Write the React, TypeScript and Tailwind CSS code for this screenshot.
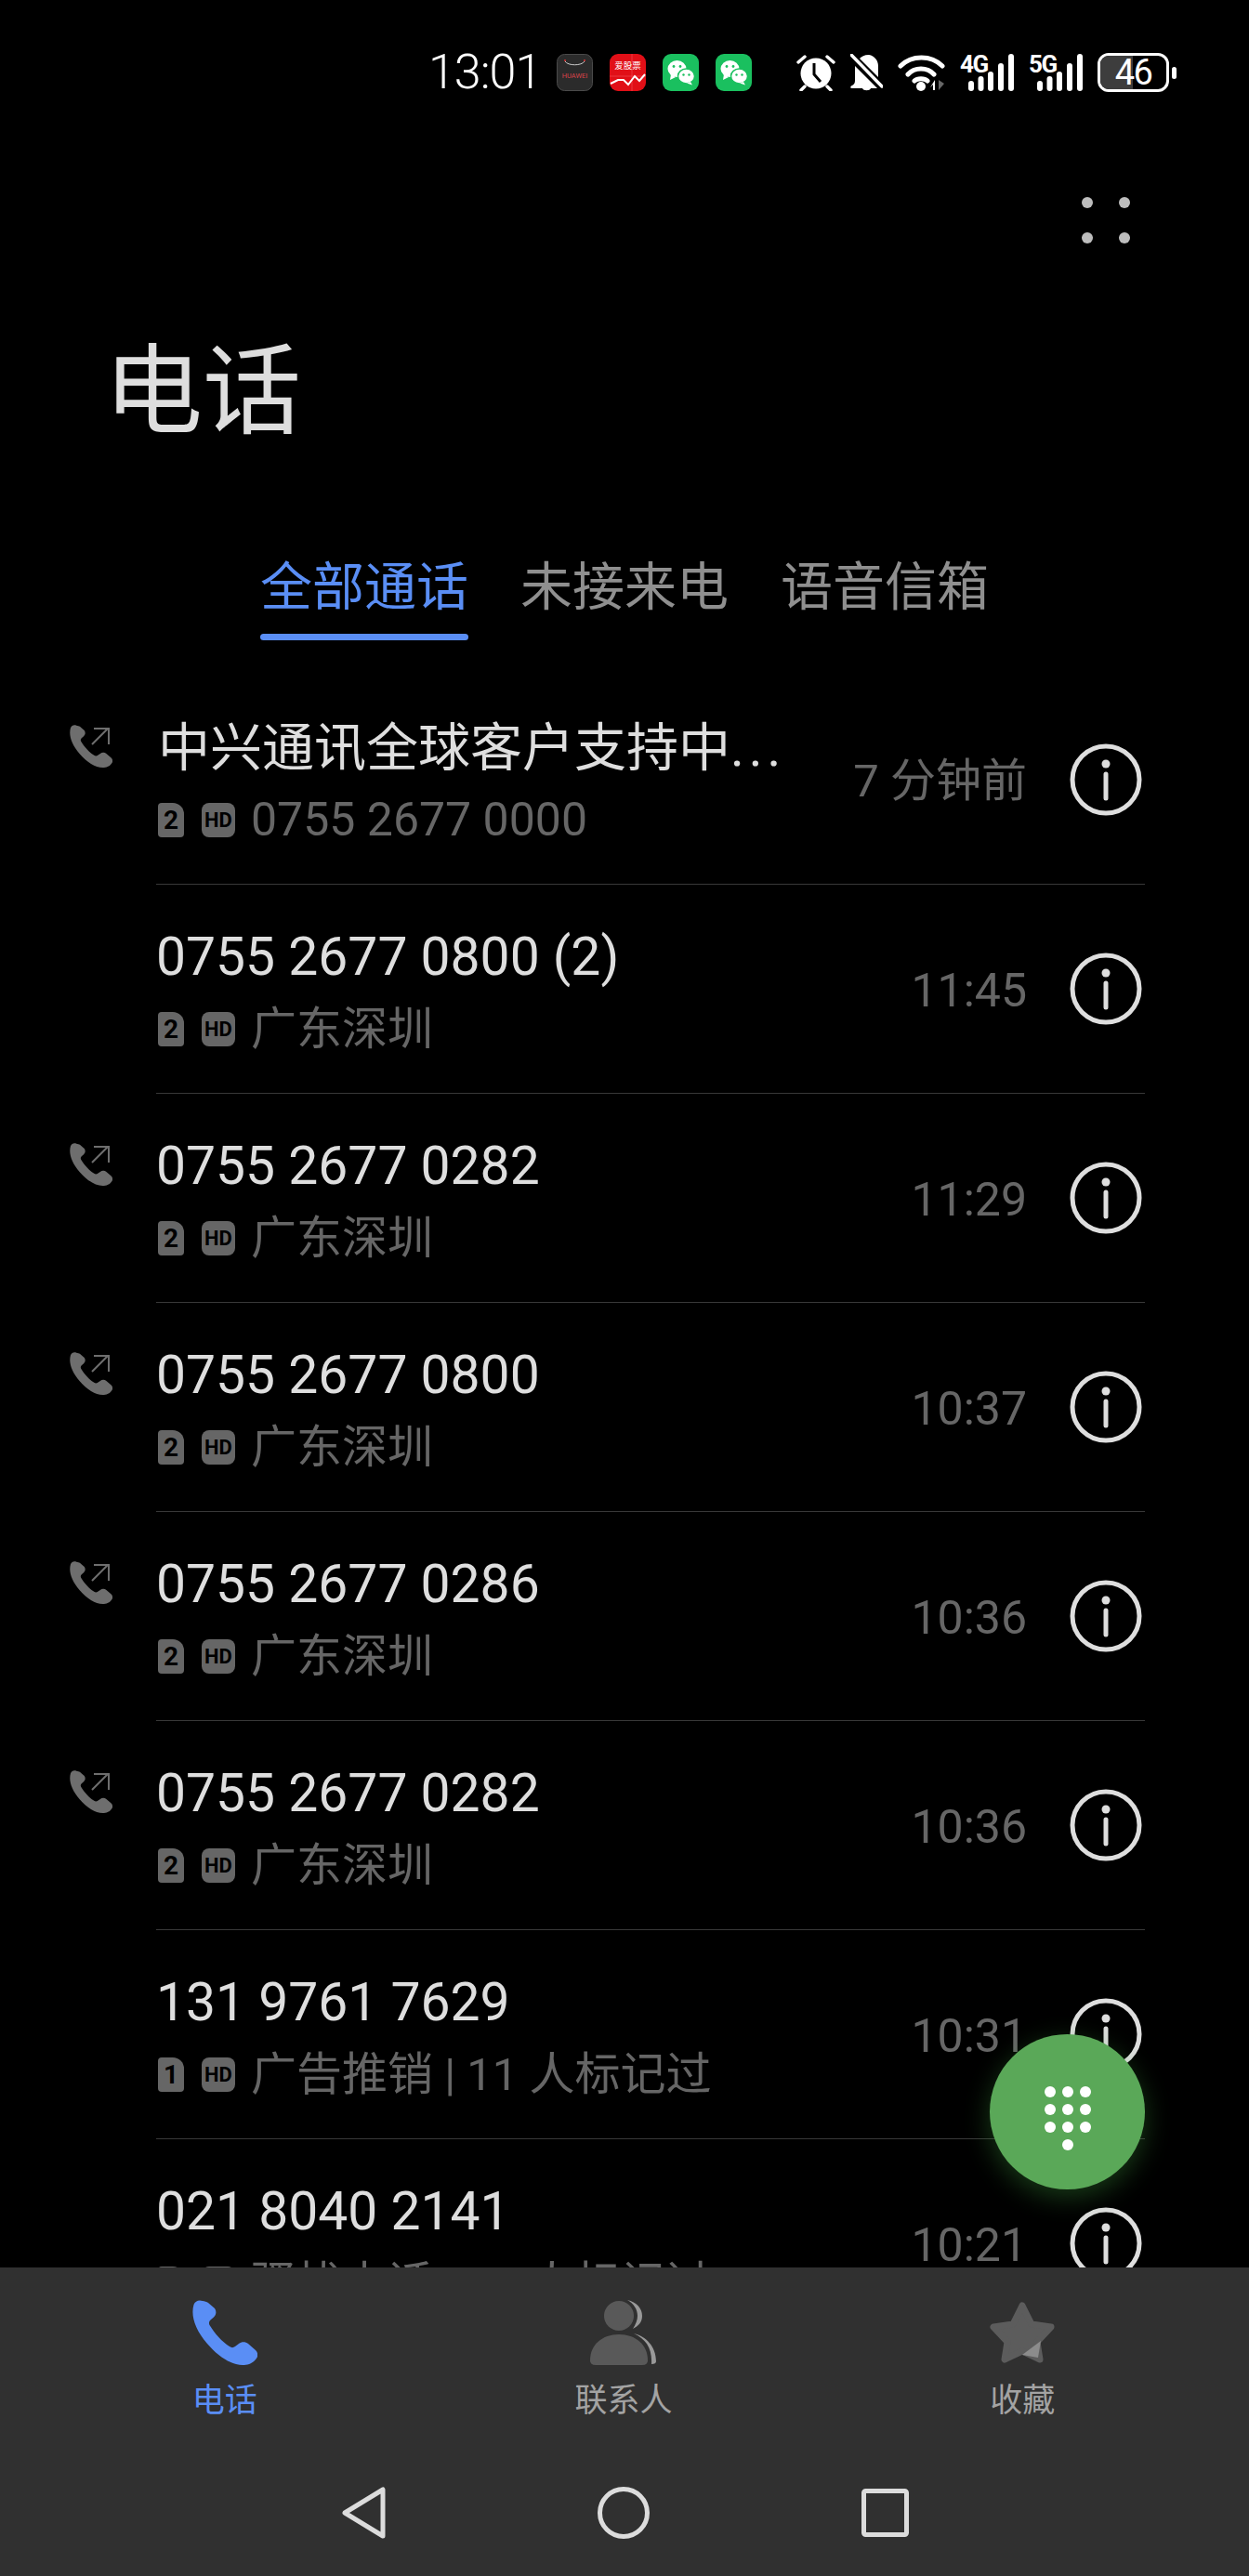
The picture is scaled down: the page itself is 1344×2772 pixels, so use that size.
const HANDSET =
  'M11 1C7-.5 3 1 1.5 5C-2 17 3 32 16 47C28 61 42 70 54 70C60 70 66 68 69.5 62C71 59 70 56 68 54L60 47C57 44.5 53 44.5 50 47L46 50C44 51.5 42 51.5 40 50C32 45 24 36 18.5 27C17.5 25 18 23 19.5 21.5L23 18.5C26 15.5 26 12 24 9L17 3C15.5 1.5 13 1.5 11 1Z'

const calls = [
  { name: '中兴通讯全球客户支持中', more: true, sim: '2', sub: '0755 2677 0000', digits: true, time: '7 分钟前', out: true },
  { name: '0755 2677 0800 (2)', sim: '2', sub: '广东深圳', time: '11:45', out: false },
  { name: '0755 2677 0282', sim: '2', sub: '广东深圳', time: '11:29', out: true },
  { name: '0755 2677 0800', sim: '2', sub: '广东深圳', time: '10:37', out: true },
  { name: '0755 2677 0286', sim: '2', sub: '广东深圳', time: '10:36', out: true },
  { name: '0755 2677 0282', sim: '2', sub: '广东深圳', time: '10:36', out: true },
  { name: '131 9761 7629', sim: '1', sub: '广告推销 | 11 人标记过', time: '10:31', out: false },
  { name: '021 8040 2141', sim: '1', sub: '骚扰电话 | 59 人标记过', time: '10:21', out: false },
]

function WeChatIcon() {
  return (
    <svg width="39" height="40" viewBox="0 0 39 40">
      <rect width="39" height="40" rx="9" fill="#1ac05f" />
      <ellipse cx="15.5" cy="16" rx="10" ry="9" fill="#fff" />
      <path d="M9 22l-1 6 6-3z" fill="#fff" />
      <ellipse cx="25.5" cy="24" rx="9" ry="8" fill="#fff" stroke="#1ac05f" strokeWidth="1.5" />
      <path d="M30 30l2 3.5-6-2z" fill="#fff" />
      <circle cx="12" cy="13.5" r="1.4" fill="#1ac05f" />
      <circle cx="19" cy="13.5" r="1.4" fill="#1ac05f" />
      <circle cx="22.5" cy="22.5" r="1.2" fill="#1ac05f" />
      <circle cx="28.5" cy="22.5" r="1.2" fill="#1ac05f" />
    </svg>
  )
}

function HuaweiIcon() {
  return (
    <svg width="39" height="40" viewBox="0 0 39 40">
      <rect x=".5" y=".5" width="38" height="39" rx="8" fill="#2b2b2b" stroke="#4a4a4a" />
      <path d="M9 8c3 5 18 5 21 0" fill="none" stroke="#c9c9c9" strokeWidth="1" />
      <circle cx="9" cy="7" r="1" fill="#d33" />
      <circle cx="30" cy="7" r="1" fill="#d33" />
      <text x="19.5" y="26" textAnchor="middle" fontSize="7.5" fill="#d8434a" fontFamily="Roboto, sans-serif">HUAWEI</text>
    </svg>
  )
}

function StockIcon() {
  return (
    <svg width="39" height="40" viewBox="0 0 39 40">
      <rect width="39" height="40" rx="9" fill="#e10f17" />
      <path d="M24 0v40M0 24h39" stroke="#f04a50" strokeWidth=".7" />
      <text x="19.5" y="16" textAnchor="middle" fontSize="9.5" fill="#fff" fontFamily="'Noto Sans CJK SC', sans-serif">爱股票</text>
      <path d="M1 32l8-4 6 0 5 5 7-9 5 5 6-7" fill="none" stroke="#fff" strokeWidth="2" />
    </svg>
  )
}

function AlarmIcon() {
  return (
    <svg width="42" height="40" viewBox="0 0 42 40">
      <circle cx="21" cy="21" r="16.5" fill="#fff" />
      <path d="M2 9l7-6M40 9l-7-6M9 35l-4 4M33 35l4 4" stroke="#fff" strokeWidth="3.4" strokeLinecap="round" />
      <path d="M19 10v12l7 8" fill="none" stroke="#000" strokeWidth="3" />
    </svg>
  )
}

function BellOffIcon() {
  return (
    <svg width="35" height="40" viewBox="0 0 35 40">
      <path d="M20 1c6 1 10 6 10 12v12l-20-20c2-2 5-4 10-4zM5 13l24 24H1c-1 0-1-3 1-3 2-1 3-3 3-5z" fill="#fff" />
      <path d="M13 37h9c-1 3-8 3-9 0z" fill="#fff" />
      <path d="M1 1l33 33" stroke="#000" strokeWidth="6" />
      <path d="M1 1l33 34" stroke="#fff" strokeWidth="3.4" strokeLinecap="round" />
    </svg>
  )
}

function WifiIcon() {
  return (
    <svg width="51" height="40" viewBox="0 0 51 40">
      <path d="M3 13C15 1 36 1 48 13M11 22C18 14 32 14 39 22M18 29C21 26 29 26 32 29" fill="none" stroke="#fff" strokeWidth="5" strokeLinecap="round" />
      <circle cx="25" cy="35" r="5" fill="#fff" />
      <path d="M40 28v11h-2v-6l-3 3z" fill="#fff" />
      <path d="M44 28v11l6-7z" fill="#666" />
    </svg>
  )
}

function SignalIcon({ label }: { label: string }) {
  const bars = [
    { x: 9, y: 29, h: 11 },
    { x: 19.5, y: 24, h: 16 },
    { x: 30, y: 19, h: 21 },
    { x: 41, y: 10, h: 30 },
    { x: 52, y: 0, h: 40 },
  ]
  return (
    <div className="relative w-[58px] h-[40px]">
      <svg width="58" height="40" viewBox="0 0 58 40">
        {bars.map((b, i) => (
          <rect key={i} x={b.x} y={b.y} width="6" height={b.h} rx="3" fill="#fff" />
        ))}
      </svg>
      <span className="absolute left-0 top-0 text-[26px] leading-[22px] font-bold tracking-[-1.5px] text-white">{label}</span>
    </div>
  )
}

function Battery() {
  return (
    <div className="flex items-center">
      <div className="relative w-[77px] h-[42px] rounded-[12px] border-[3px] border-white">
        <div className="absolute left-0 top-0 bottom-0 w-[35px] rounded-l-[9px] bg-[#3d3d3d]" />
        <div className="relative text-center text-white text-[38px] leading-[36px] tracking-[-1.5px]">46</div>
      </div>
      <div className="w-[5px] h-[13px] ml-[3px] rounded-full bg-white" />
    </div>
  )
}

function OutgoingIcon() {
  return (
    <svg width="46" height="46" viewBox="0 0 46 46">
      <path d={HANDSET} fill="#6e6e6e" transform="scale(.657)" />
      <path d="M24 21L41 4M26 4h16v17" fill="none" stroke="#6e6e6e" strokeWidth="2" />
    </svg>
  )
}

function InfoIcon() {
  return (
    <svg width="78" height="78" viewBox="0 0 78 78">
      <circle cx="39" cy="39" r="36" fill="none" stroke="#dedede" strokeWidth="5" />
      <circle cx="39" cy="22" r="4.5" fill="#dedede" />
      <path d="M39 33v26" stroke="#dedede" strokeWidth="5" strokeLinecap="round" />
    </svg>
  )
}

function SimBadge({ n }: { n: string }) {
  return (
    <span className="flex items-center justify-center w-[28px] h-[37px] ml-[2px] bg-[#666] text-black text-[28px] font-bold rounded-[4px] rounded-tr-[12px]">
      {n}
    </span>
  )
}

function CallRow({ call }: { call: (typeof calls)[number] }) {
  return (
    <div className="flex h-[225px]">
      <div className="w-[168px] shrink-0 pl-[75px] pt-[53px]">{call.out && <OutgoingIcon />}</div>
      <div className="flex flex-1 items-center mr-[112px] pr-[3px] border-b border-[#383838]">
        <div className="flex-1 min-w-0 mt-[9px]">
          <div className={`leading-[64px] text-[#dedede] whitespace-nowrap ${call.more ? 'text-[56px] pl-[2px]' : 'text-[57px]'}`}>
            {call.name}
            {call.more && <span className="tracking-[5px]">...</span>}
          </div>
          <div className="flex items-center mt-[14px] h-[64px] text-[#666] whitespace-nowrap">
            <SimBadge n={call.sim} />
            <span className="flex items-center justify-center w-[36px] h-[37px] ml-[19px] bg-[#666] text-black text-[22px] font-bold rounded-[8px]">HD</span>
            <span className={`ml-[17px] ${call.digits ? 'text-[50px]' : 'text-[49px]'}`}>{call.sub}</span>
          </div>
        </div>
        <div className={`text-[#666] whitespace-nowrap mt-[4px] mr-[46px] ${call.more ? 'text-[49px]' : 'text-[50px]'}`}>{call.time}</div>
        <InfoIcon />
      </div>
    </div>
  )
}

function NavTab({ label, active, children }: { label: string; active?: boolean; children: React.ReactNode }) {
  return (
    <div className="flex flex-col items-center">
      <div className="h-[70px] flex items-center">{children}</div>
      <div className={`text-[35px] leading-[44px] mt-[17px] ${active ? 'text-[#5a8ef5]' : 'text-[#a3a3a3]'}`}>{label}</div>
    </div>
  )
}

export default function App() {
  return (
    <div className="relative flex flex-col w-[1344px] h-[2772px] bg-black overflow-hidden font-[family-name:Roboto,'Noto_Sans_CJK_SC',sans-serif]">
      {/* Status bar */}
      <div className="flex items-center h-[42px] mt-[57px] pl-[461px]">
        <span className="w-[117px] text-white text-[52px] leading-[42px] font-light tracking-[-1px] whitespace-nowrap">13:01</span>
        <div className="flex items-center gap-[18px] ml-[21px]">
          <HuaweiIcon />
          <StockIcon />
          <WeChatIcon />
          <WeChatIcon />
        </div>
        <div className="flex items-center gap-[16px] ml-[48px]">
          <AlarmIcon />
          <BellOffIcon />
          <WifiIcon />
          <SignalIcon label="4G" />
          <SignalIcon label="5G" />
          <Battery />
        </div>
      </div>

      {/* More menu */}
      <div className="flex justify-end mt-[113px] pr-[128px]">
        <div className="grid grid-cols-2 gap-x-[28px] gap-y-[26px]">
          <span className="w-[12px] h-[12px] rounded-full bg-[#bdbdbd]" />
          <span className="w-[12px] h-[12px] rounded-full bg-[#bdbdbd]" />
          <span className="w-[12px] h-[12px] rounded-full bg-[#bdbdbd]" />
          <span className="w-[12px] h-[12px] rounded-full bg-[#bdbdbd]" />
        </div>
      </div>

      <h1 className="mt-[108px] pl-[112px] text-[106px] leading-[104px] text-[#dedede]">电话</h1>

      {/* Tabs */}
      <div className="flex justify-center gap-[56px] mt-[126px] text-[56px] leading-[64px] text-[#8f8f8f]">
        <div className="flex flex-col items-center">
          <span className="text-[#5a8ef5]">全部通话</span>
          <span className="w-[224px] h-[7px] mt-[18px] rounded-full bg-[#5a8ef5]" />
        </div>
        <span>未接来电</span>
        <span>语音信箱</span>
      </div>

      {/* Call log */}
      <div className="flex-1 min-h-0 mt-[38px] overflow-hidden">
        {calls.map((call, idx) => (
          <CallRow key={idx} call={call} />
        ))}
      </div>

      {/* Bottom nav */}
      <div className="relative shrink-0 h-[332px] bg-[#303030]">
        <div className="grid grid-cols-3 pl-[27px] pr-[29px] pt-[35px]">
          <NavTab label="电话" active>
            <svg width="70" height="70" viewBox="0 0 70 70">
              <path d={HANDSET} fill="#5a8ef5" />
            </svg>
          </NavTab>
          <NavTab label="联系人">
            <svg width="71" height="70" viewBox="0 0 71 70">
              <path d="M40 0C50 2 56 9 56 17C56 24 52 28 46 31C49 26 51 22 51 17C51 10 47 4 40 0Z" fill="#999" />
              <path d="M47 36C60 39 71 50 71 66Q71 69 66 69C67 52 60 42 47 36Z" fill="#999" />
              <circle cx="31" cy="17" r="16" fill="#595959" />
              <path d="M0 65C0 48 13 37 31 37C49 37 62 48 62 65Q62 70 56 70H6Q0 70 0 65Z" fill="#595959" />
            </svg>
          </NavTab>
          <NavTab label="收藏">
            <svg width="70" height="66" viewBox="0 0 70 66">
              <path d="M35 4L45 24L66 27L51 43L54 62L35 53L16 62L19 43L4 27L25 24Z" fill="#5c5c5c" stroke="#5c5c5c" strokeWidth="7" strokeLinejoin="round" />
              <path d="M35 57L55 42L52 60Z" fill="#8c8c8c" />
            </svg>
          </NavTab>
        </div>
        {/* System navigation */}
        <div className="flex items-center justify-center gap-[228px] mt-[70px] pl-[2px]">
          <svg width="47" height="56" viewBox="0 0 47 56">
            <path d="M44 3V53L3 28Z" fill="none" stroke="#dcdcdc" strokeWidth="5" strokeLinejoin="round" />
          </svg>
          <svg width="56" height="56" viewBox="0 0 56 56">
            <circle cx="28" cy="28" r="25.5" fill="none" stroke="#dcdcdc" strokeWidth="5" />
          </svg>
          <svg width="51" height="52" viewBox="0 0 51 52">
            <rect x="2.5" y="2.5" width="46" height="47" rx="2" fill="none" stroke="#dcdcdc" strokeWidth="5" />
          </svg>
        </div>
      </div>

      {/* Dialpad FAB */}
      <div className="absolute left-[1065px] top-[2189px] w-[167px] h-[167px] pt-[14px] rounded-full bg-[#5aa858] shadow-[0_8px_28px_rgba(70,170,70,0.35)] grid grid-cols-[repeat(3,12px)] gap-[7px] content-center justify-center">
        {[0, 1, 2, 3, 4, 5, 6, 7, 8].map((i) => (
          <span key={i} className="w-[12px] h-[12px] rounded-full bg-white" />
        ))}
        <span className="col-start-2 w-[12px] h-[12px] rounded-full bg-white" />
      </div>
    </div>
  )
}
